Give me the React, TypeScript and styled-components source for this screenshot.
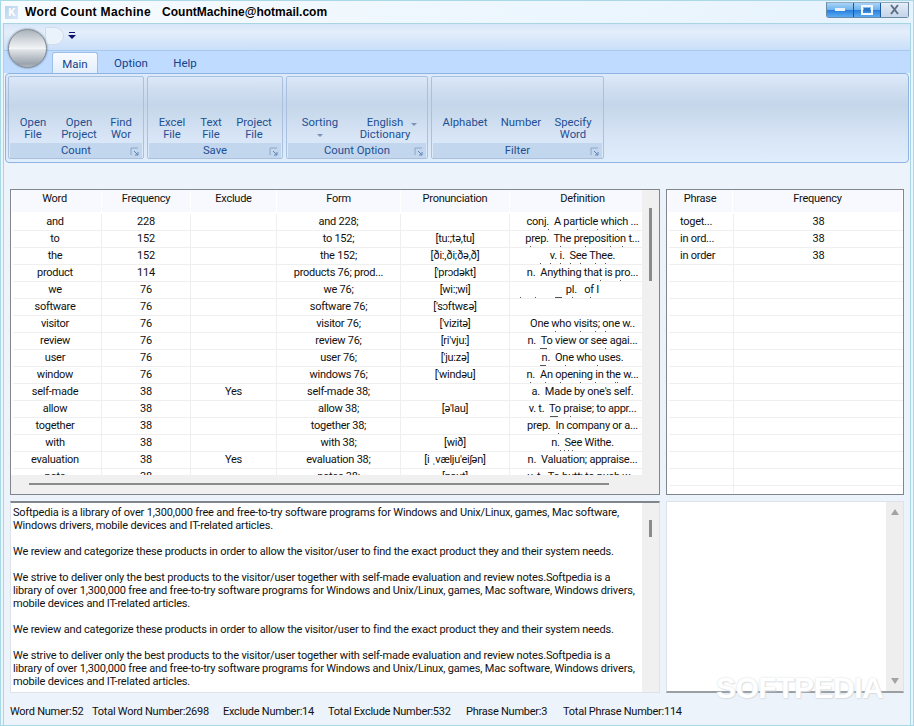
import React from "react";
import styled, { createGlobalStyle } from "styled-components";

const Global = createGlobalStyle`
html, body { margin: 0; padding: 0; background: #eaf3fa; }
* { box-sizing: border-box; }
`;

const UI = `Roboto, "Liberation Sans", Arial, sans-serif`;

const Win = styled.div`
width: 914px;
height: 726px;
overflow: hidden;
position: relative;
display: flex;
flex-direction: column;
font-family: ${UI};
font-size: 11px;
letter-spacing: -0.25px;
background: #e9f4fb;
border: 1px solid #a9d8e6;
`;

const TitleBar = styled.div`
height: 22px;
flex: none;
display: flex;
align-items: center;
padding-left: 4px;
background: linear-gradient(90deg, #f6fbff, #eef7fe 50%, #e6f3fd);
`;

const AppIcon = styled.div`
width: 13px;
height: 13px;
background: linear-gradient(135deg, #b9d4ee, #d8e8f6);
color: #fff;
font-size: 11px;
font-weight: bold;
line-height: 13px;
text-align: center;
`;

const TitleText = styled.span<{ $left: number; $tracking?: number }>`
font-family: "Liberation Sans", Arial, sans-serif;
font-weight: bold;
font-size: 12px;
letter-spacing: ${(p) => p.$tracking || 0}px;
color: #000;
margin-left: ${(p) => p.$left}px;
text-shadow: 0 0 4px #fff;
`;

const Controls = styled.div`
margin-left: auto;
margin-right: 4px;
margin-top: -5px;
display: flex;
border: 1px solid #6b8aa6;
border-top-color: #8fa9bf;
border-radius: 0 0 3px 3px;
height: 16px;
`;

const Ctl = styled.div<{ $kind: "blue" | "close" }>`
width: 27px;
display: flex;
align-items: center;
justify-content: center;
border-right: ${(p) => (p.$kind === "close" ? "none" : "1px solid #1c5a9a")};
background: ${(p) =>
    p.$kind === "close"
        ? "linear-gradient(#e6eef8, #d3e0ef 50%, #c5d5e8)"
        : "linear-gradient(#a9d4f8, #6fb2ee 48%, #2a7fdb 52%, #59acf2)"};
`;

const Main = styled.div`
flex: 1;
min-height: 0;
margin: 0 2px;
border: 1px solid #a9d4e2;
border-bottom: none;
display: flex;
flex-direction: column;
background: #ecf3fb;
position: relative;
`;

const Qat = styled.div`
height: 26px;
flex: none;
padding: 8px 0 0 64px;
background: linear-gradient(#d6e6f9, #e4eefb 30%, #c9dff9);
`;

const QatMenu = styled.svg`
display: block;
`;

const TabRow = styled.div`
height: 23px;
flex: none;
display: flex;
align-items: flex-end;
padding-left: 48px;
background: #bfdbff;
border-top: 1px solid #a8c8ec;
`;

const Tab = styled.div<{ $active?: boolean; $width: number }>`
width: ${(p) => p.$width}px;
height: 21px;
line-height: 22px;
text-align: center;
font-size: 11.5px;
letter-spacing: 0;
color: #15428b;
${(p) =>
    p.$active &&
    `background: linear-gradient(#f8fbff, #e3eefb);
     border: 1px solid #9ebfe6;
     border-bottom: none;
     border-radius: 3px 3px 0 0;`}
`;

const Orb = styled.div`
position: absolute;
left: 4px;
top: 5px;
width: 39px;
height: 39px;
border-radius: 50%;
border: 1px solid #7d8a96;
box-shadow: 0 0 2px #5d6a76;
background: linear-gradient(#aab2ba 0%, #d8dce0 30%, #f2f4f6 50%, #dfe3e7 54%, #b8bfc6 75%, #9aa3ac 92%, #b5bcc4 100%);
`;

const QatGhost = styled.div`
position: absolute;
left: 41px;
top: 3px;
width: 19px;
height: 18px;
border-radius: 2px 10px 10px 2px;
border: 1px solid #cfdcec;
background: #eaf2fc;
`;

const Panel = styled.div`
height: 90px;
flex: none;
margin: 0 1px;
padding: 2px;
display: flex;
gap: 3px;
border: 1px solid #8fb4e4;
border-radius: 4px;
background: linear-gradient(#deebfb 0%, #d2e0f2 14%, #c5d6ea 36%, #d7e5f6 72%, #e0edfc 100%);
`;

const Group = styled.div<{ $width: number }>`
width: ${(p) => p.$width}px;
height: 83px;
flex: none;
display: flex;
flex-direction: column;
border: 1px solid #a9c1df;
border-radius: 2px;
`;

const GroupBody = styled.div`
height: 66px;
flex: none;
display: flex;
padding: 40px 0 0 3px;
`;

const RibbonBtn = styled.div<{ $width: number }>`
width: ${(p) => p.$width}px;
flex: none;
position: relative;
white-space: nowrap;
overflow: hidden;
text-align: center;
color: #1e4f92;
line-height: 12px;
font-size: 11.3px;
letter-spacing: 0;
`;

const Caret = styled.i`
display: block;
width: 0;
height: 0;
margin: 5px auto 0;
border: 3px solid transparent;
border-top: 3px solid #7a94b8;
border-bottom: none;
`;

const SideCaret = styled(Caret)`
position: absolute;
right: 3px;
top: 6px;
margin: 0;
`;

const GroupLabel = styled.div`
height: 15px;
margin: 0 1px;
position: relative;
text-align: center;
line-height: 16px;
font-size: 11.3px;
letter-spacing: 0;
color: #1e4f92;
background: #c2d7ee;
`;

const LauncherIcon = styled.svg`
position: absolute;
right: 2px;
top: 4px;
`;

const Spacer = styled.div`
height: 26px;
flex: none;
`;

const Grids = styled.div`
display: flex;
gap: 6px;
height: 306px;
flex: none;
padding: 0 6px;
`;

const TableBox = styled.div<{ $width: number }>`
width: ${(p) => p.$width}px;
flex: none;
border: 1px solid #80868c;
background: #fff;
display: flex;
flex-direction: column;
position: relative;
overflow: hidden;
`;

const HeadRow = styled.div<{ $cols: string }>`
display: grid;
grid-template-columns: ${(p) => p.$cols};
height: 24px;
flex: none;
background: #fff;
padding-left: 1px;
`;

const HeadCell = styled.div<{ $shift?: number }>`
height: 22px;
margin-right: 1px;
padding: 1px ${(p) => p.$shift || 0}px 0 0;
background: #f7f9fe;
text-align: center;
line-height: 15px;
color: #111;
`;

const Rows = styled.div`
flex: 1;
min-height: 0;
overflow: hidden;
padding-left: 2px;
`;

const Row = styled.div<{ $cols: string }>`
display: grid;
grid-template-columns: ${(p) => p.$cols};
height: 17px;
border-bottom: 1px solid #efefef;
`;

const Cell = styled.div<{ $align?: string; $shift?: number }>`
height: 16px;
padding: 1px ${(p) => p.$shift || 0}px 0 ${(p) => (p.$align === "left" ? "11px" : "0")};
border-right: 1px solid #efefef;
text-align: ${(p) => p.$align || "center"};
line-height: 14px;
color: #111;
white-space: pre;
overflow: hidden;
`;

const CellText = styled.div`
height: 14px;
overflow: hidden;
`;

const Ticks = styled.svg`
display: block;
`;

const VBar = styled.div`
position: absolute;
top: 0;
right: 0;
bottom: 0;
width: 17px;
background: #f0f0f0;
`;

const VThumb = styled.div<{ $top: number; $height: number }>`
position: absolute;
left: 7px;
top: ${(p) => p.$top}px;
width: 3px;
height: ${(p) => p.$height}px;
background: #8b8b8b;
`;

const HBar = styled.div`
position: absolute;
left: 0;
right: 17px;
bottom: 0;
height: 19px;
background: #f0f0f0;
`;

const HThumb = styled.div`
position: absolute;
left: 18px;
top: 8px;
width: 580px;
height: 2px;
background: #8b8b8b;
`;

const Lower = styled.div`
display: flex;
gap: 6px;
height: 192px;
flex: none;
margin-top: 6px;
padding: 0 6px;
`;

const TextPane = styled.div`
width: 650px;
flex: none;
position: relative;
border: 1px solid #dce4ea;
border-top: 2px solid #80868c;
background: #fff;
padding: 3px 0 0 2px;
overflow: hidden;
`;

const TextLine = styled.div`
height: 13px;
line-height: 13px;
letter-spacing: -0.17px;
color: #111;
white-space: pre;
`;

const NotesPane = styled.div`
width: 238px;
flex: none;
position: relative;
border: 1px solid #dce4ea;
border-bottom: 2px solid #9a9fa4;
background: #fff;
`;

const NotesBar = styled.div`
position: absolute;
top: 0;
right: 0;
bottom: 0;
width: 17px;
background: #eeeeee;
display: flex;
flex-direction: column;
justify-content: space-between;
align-items: center;
padding: 7px 0;
`;

const Arrow = styled.i<{ $dir: "up" | "down" }>`
display: block;
width: 0;
height: 0;
border-left: 4.5px solid transparent;
border-right: 4.5px solid transparent;
${(p) => (p.$dir === "up" ? "border-bottom: 6px solid #a3a3a3;" : "border-top: 6px solid #a3a3a3;")}
`;

const Status = styled.div`
flex: 1;
display: grid;
grid-template-columns: 82px 131px 105px 138px 97px auto;
align-items: center;
padding: 4px 0 0 6px;
color: #111;
white-space: nowrap;
`;

const Watermark = styled.div`
position: absolute;
left: 715px;
top: 672px;
font-family: "Liberation Sans", Arial, sans-serif;
font-weight: bold;
font-size: 30px;
line-height: 30px;
letter-spacing: -0.5px;
color: #fff;
text-shadow: 0 0 2px #cfd5da, 1px 1px 1px #dfe3e6;
`;

const WORD_COLS = "89px 89px 86px 124px 109px 146px";
const HEAD_COLS = "90px 89px 86px 124px 109px 146px";
const PHRASE_COLS = "65px 170px";

type WordRow = { w: string; f: string; x?: string; form: string; p?: string; d?: string; t?: number[] };

// t = x offsets of the ascenders of the clipped second line in Definition
const words: WordRow[] = [
    { w: "and", f: "228", form: "and 228;", d: "conj.  A particle which ...", t: [38, 67, 87, 107] },
    { w: "to", f: "152", form: "to 152;", p: "[tu:;tə,tu]", d: "prep.  The preposition t...", t: [20, 50, 75, 100, 112] },
    { w: "the", f: "152", form: "the 152;", p: "[ði:,ði;ðə,ð]", d: "v. i.  See Thee.", t: [30, 40, 50, 60, 70, 85, 95] },
    { w: "product", f: "114", form: "products 76; prod...", p: "['prɔdəkt]", d: "n.  Anything that is pro...", t: [90, 110] },
    { w: "we", f: "76", form: "we 76;", p: "[wi:;wi]", d: "pl.   of I", t: [10, 25, 45, 46, 47, 48, 49, 50, 51, 62, 80] },
    { w: "software", f: "76", form: "software 76;", p: "['sɔftwεə]" },
    { w: "visitor", f: "76", form: "visitor 76;", p: "['vizitə]", d: "One who visits; one w..", t: [45, 70, 85, 95] },
    { w: "review", f: "76", form: "review 76;", p: "[ri'vju:]", d: "n.  To view or see agai...", t: [30, 31, 32, 33, 34, 35, 36, 95] },
    { w: "user", f: "76", form: "user 76;", p: "['ju:zə]", d: "n.  One who uses.", t: [30, 31, 32, 33, 34, 35, 55, 87] },
    { w: "window", f: "76", form: "windows 76;", p: "['windəu]", d: "n.  An opening in the w...", t: [20, 35, 50, 70, 85, 105, 107] },
    { w: "self-made", f: "38", x: "Yes", form: "self-made 38;", d: "a.  Made by one's self." },
    { w: "allow", f: "38", form: "allow 38;", p: "[ə'lau]", d: "v. t.  To praise; to appr...", t: [40, 41, 42, 43, 44, 45, 46, 47, 60] },
    { w: "together", f: "38", form: "together 38;", d: "prep.  In company or a...", t: [48] },
    { w: "with", f: "38", form: "with 38;", p: "[wið]", d: "n.  See Withe.", t: [50, 54, 58, 62] },
    { w: "evaluation", f: "38", x: "Yes", form: "evaluation 38;", p: "[i ˌvælju'eiʃən]", d: "n.  Valuation; appraise..." },
    { w: "note", f: "38", form: "notes 38;", p: "[nəut]", d: "v. t.  To butt; to push w..." },
];

const phrases = ["toget...", "in ord...", "in order"];

const strive = [
    "We strive to deliver only the best products to the visitor/user together with self-made evaluation and review notes.Softpedia is a",
    "library of over 1,300,000 free and free-to-try software programs for Windows and Unix/Linux, games, Mac software, Windows drivers,",
    "mobile devices and IT-related articles.",
];
const review = "We review and categorize these products in order to allow the visitor/user to find the exact product they and their system needs.";

const lines = [
    "Softpedia is a library of over 1,300,000 free and free-to-try software programs for Windows and Unix/Linux, games, Mac software,",
    "Windows drivers, mobile devices and IT-related articles.",
    " ", review, " ", ...strive, " ", review, " ", ...strive,
];

const ribbon = [
    { label: "Count", width: 136, items: [["Open", "File", 42], ["Open", "Project", 50], ["Find", "Wor", 34]] },
    { label: "Save", width: 136, items: [["Excel", "File", 42], ["Text", "File", 36], ["Project", "File", 50]] },
];

const Launcher = () => (
    <LauncherIcon width="10" height="10" viewBox="0 0 10 10">
        <path d="M1 8V1h7" fill="none" stroke="#8ba6c8" strokeWidth="1" />
        <path d="M4 4l4 4M8 5v3H5" fill="none" stroke="#5f84b4" strokeWidth="1" />
    </LauncherIcon>
);

const App: React.FC = () => {
    return <Win>
        <Global />
        <TitleBar>
            <AppIcon>K</AppIcon>
            <TitleText $left={7} $tracking={0.35}>Word Count Machine</TitleText>
            <TitleText $left={11}>CountMachine@hotmail.com</TitleText>
            <Controls>
                <Ctl $kind="blue">
                    <svg width="11" height="4" viewBox="0 0 11 4"><rect x="0" y="0" width="10" height="3" fill="#e8f2fb" /></svg>
                </Ctl>
                <Ctl $kind="blue">
                    <svg width="12" height="10" viewBox="0 0 12 10"><rect x="1" y="1" width="10" height="8" fill="none" stroke="#f2f8fd" strokeWidth="2" /><rect x="3" y="3" width="6" height="3" fill="#2c74c4" /></svg>
                </Ctl>
                <Ctl $kind="close">
                    <svg width="11" height="11" viewBox="0 0 11 11"><path d="M2 1l7 9M9 1l-7 9" stroke="#5d6f85" strokeWidth="2" fill="none" /></svg>
                </Ctl>
            </Controls>
        </TitleBar>
        <Main>
            <Qat>
                <QatMenu width="8" height="7" viewBox="0 0 8 7"><path d="M1 0h6v1H1zM0 3h8L4 7z" fill="#10106e" /></QatMenu>
            </Qat>
            <TabRow>
                <Tab $active $width={46}>Main</Tab>
                <Tab $width={66}>Option</Tab>
                <Tab $width={42}>Help</Tab>
            </TabRow>
            <Panel>
                {ribbon.map((g) => <Group key={g.label} $width={g.width}>
                    <GroupBody>
                        {g.items.map(([a, b, w]) => <RibbonBtn key={`${a}${b}`} $width={w as number}>{a}<br />{b}</RibbonBtn>)}
                    </GroupBody>
                    <GroupLabel>{g.label}<Launcher /></GroupLabel>
                </Group>)}
                <Group $width={142}>
                    <GroupBody>
                        <RibbonBtn $width={60}>Sorting<Caret /></RibbonBtn>
                        <RibbonBtn $width={70}>English<br />Dictionary<SideCaret /></RibbonBtn>
                    </GroupBody>
                    <GroupLabel>Count Option<Launcher /></GroupLabel>
                </Group>
                <Group $width={173}>
                    <GroupBody>
                        <RibbonBtn $width={60}>Alphabet</RibbonBtn>
                        <RibbonBtn $width={52}>Number</RibbonBtn>
                        <RibbonBtn $width={52}>Specify<br />Word</RibbonBtn>
                    </GroupBody>
                    <GroupLabel>Filter<Launcher /></GroupLabel>
                </Group>
            </Panel>
            <Spacer />
            <Grids>
                <TableBox $width={650}>
                    <HeadRow $cols={HEAD_COLS}>
                        <HeadCell $shift={4}>Word</HeadCell>
                        {["Frequency", "Exclude", "Form", "Pronunciation", "Definition"].map((h) => <HeadCell key={h}>{h}</HeadCell>)}
                    </HeadRow>
                    <Rows>
                        {words.map((r) => <Row key={r.w} $cols={WORD_COLS}>
                            <Cell $shift={4}>{r.w}</Cell>
                            <Cell>{r.f}</Cell>
                            <Cell>{r.x}</Cell>
                            <Cell>{r.form}</Cell>
                            <Cell>{r.p}</Cell>
                            <Cell>
                                <CellText>{r.d}</CellText>
                                <Ticks width="131" height="1">
                                    {(r.t || []).map((x) => <rect key={x} x={x} y="0" width="1" height="1" fill="#555" />)}
                                </Ticks>
                            </Cell>
                        </Row>)}
                    </Rows>
                    <VBar><VThumb $top={18} $height={73} /></VBar>
                    <HBar><HThumb /></HBar>
                </TableBox>
                <TableBox $width={238}>
                    <HeadRow $cols={PHRASE_COLS}>
                        <HeadCell>Phrase</HeadCell>
                        <HeadCell>Frequency</HeadCell>
                    </HeadRow>
                    <Rows>
                        {Array.from({ length: 17 }).map((_, i) => <Row key={i} $cols={PHRASE_COLS}>
                            <Cell $align="left">{phrases[i]}</Cell>
                            <Cell>{phrases[i] ? "38" : ""}</Cell>
                        </Row>)}
                    </Rows>
                </TableBox>
            </Grids>
            <Lower>
                <TextPane>
                    {lines.map((t, i) => <TextLine key={i}>{t}</TextLine>)}
                    <VBar><VThumb $top={17} $height={17} /></VBar>
                </TextPane>
                <NotesPane>
                    <NotesBar>
                        <Arrow $dir="up" />
                        <Arrow $dir="down" />
                    </NotesBar>
                </NotesPane>
            </Lower>
            <Status>
                <span>Word Numer:52</span>
                <span>Total Word Number:2698</span>
                <span>Exclude Number:14</span>
                <span>Total Exclude Number:532</span>
                <span>Phrase Number:3</span>
                <span>Total Phrase Number:114</span>
            </Status>
            <QatGhost />
            <Orb />
        </Main>
        <Watermark>SOFTPEDIA</Watermark>
    </Win>
}

export default App;
